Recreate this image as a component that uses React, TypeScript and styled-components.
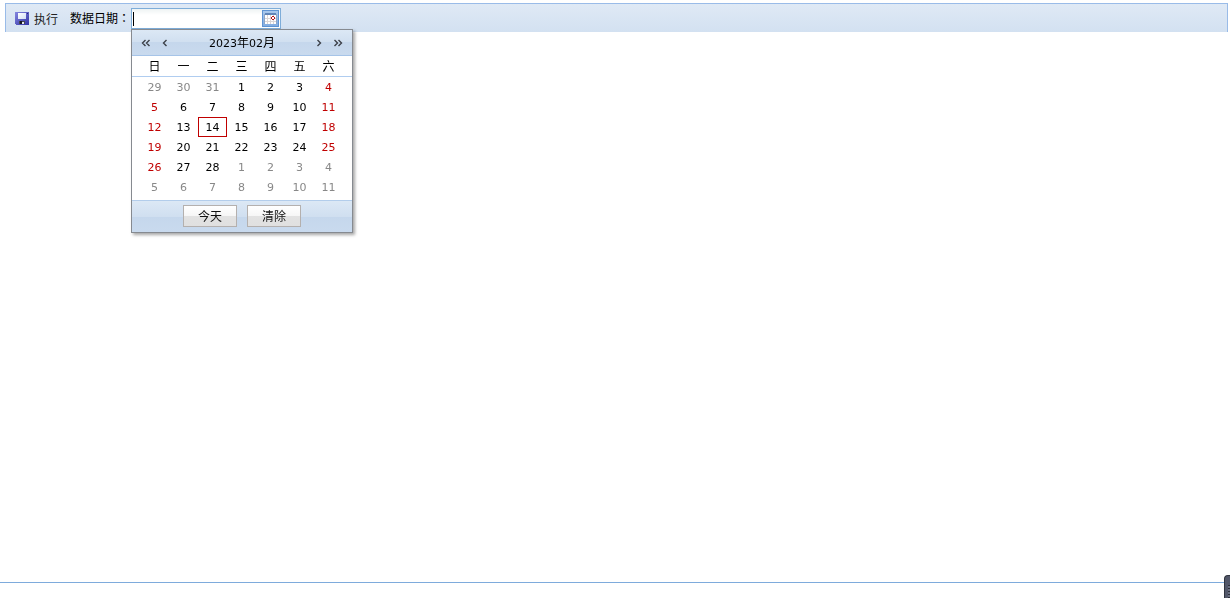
import React, { useEffect, useRef, useState } from "react";
import styled, { createGlobalStyle, css } from "styled-components";

const cjk = '"Noto Sans CJK SC", sans-serif';

const GlobalStyle = createGlobalStyle`
  *, *::before, *::after { box-sizing: border-box; }
  body {
    margin: 0;
    background: #fff;
    color: #000;
    font: 12px/16px ${cjk};
  }
`;

const Page = styled.div`
  min-height: 100vh;
  display: flex;
  flex-direction: column;
`;

const Main = styled.main`
  flex: 1;
  padding: 3px 2px 0 5px;
  border-bottom: 1px solid #7eabdc;
`;

const StatusBar = styled.footer`
  height: 15px;
`;

const Toolbar = styled.div`
  display: flex;
  align-items: flex-start;
  height: 29px;
  padding: 4px 0 0 7px;
  border: 1px solid #99bbe8;
  border-bottom: 0;
  background: linear-gradient(#dfe9f5, #d3e1f1);
`;

const ToolButton = styled.button`
  display: flex;
  align-items: center;
  gap: 4px;
  height: 22px;
  margin: 0;
  padding: 0 12px 0 1px;
  border: 0;
  background: none;
  color: #222;
  font: 12px/16px ${cjk};
`;

const FieldLabel = styled.label`
  padding-top: 2px;
  font-family: "Noto Sans CJK TC", sans-serif;
`;

const DateField = styled.div`
  position: relative;
  display: flex;
  width: 150px;
  height: 21px;
  padding: 1px;
  margin-left: 1px;
  border: 1px solid #7eadd9;
  background: linear-gradient(#eef3f3, #fff 6px);
`;

const DateInput = styled.input`
  flex: 1;
  min-width: 0;
  padding: 0 1px;
  border: 0;
  outline: 0;
  background: none;
  caret-color: transparent;
  font: 12px/16px ${cjk};
`;

const Caret = styled.span`
  position: absolute;
  top: 3px;
  left: 1px;
  width: 1px;
  height: 14px;
  background: #000;
  pointer-events: none;
`;

const Trigger = styled.button`
  display: flex;
  width: 17px;
  height: 17px;
  padding: 1px;
  border: 1px solid #5f94d3;
  background: linear-gradient(#a9c8ec, #82ade2);
`;

const Popup = styled.div`
  position: absolute;
  top: 20px;
  left: -1px;
  z-index: 1;
  width: 222px;
  border: 1px solid #868a90;
  background: #fff;
  box-shadow: 2px 2px 3px rgba(0, 0, 0, 0.35);
`;

const barFill = css`
  background: linear-gradient(#dce8f5, #d0dff0 50%, #c5d7ec 50%, #c9daee);
`;

const Header = styled.div`
  display: flex;
  align-items: center;
  height: 26px;
  padding: 0 7px;
  border-bottom: 1px solid #a6c4e8;
  ${barFill}
`;

const NavButton = styled.button<{ $wide?: boolean }>`
  display: flex;
  justify-content: center;
  width: ${(p) => (p.$wide ? 14 : 24)}px;
  padding: 0;
  border: 0;
  background: none;
`;

const Title = styled.div`
  flex: 1;
  display: flex;
  justify-content: center;
  align-items: baseline;
`;

const Digits = styled.span`
  font: 11px/16px "DejaVu Sans", sans-serif;
`;

const Days = styled.table`
  width: 100%;
  border-spacing: 0;
  margin-bottom: 3px;
  table-layout: fixed;
  text-align: center;
`;

const Gutter = styled.col<{ $width: number }>`
  width: ${(p) => p.$width}px;
`;

const WeekCell = styled.th`
  height: 21px;
  padding: 0;
  border-bottom: 1px solid #b0cdf0;
  font-weight: normal;
`;

const DayCell = styled.td<{ $tone: "plain" | "weekend" | "other"; $today?: boolean }>`
  height: 20px;
  padding: 1px 0 0;
  font: 11px/16px "DejaVu Sans", sans-serif;
  color: ${(p) => ({ plain: "#000", weekend: "#c00000", other: "#888" })[p.$tone]};
  outline: ${(p) => (p.$today ? "1px solid #c00000" : "none")};
  outline-offset: -1px;
`;

const Footer = styled.div`
  display: flex;
  justify-content: center;
  gap: 10px;
  height: 32px;
  padding-top: 4px;
  border-top: 1px solid #b3cdeb;
  ${barFill}
`;

const FooterButton = styled.button`
  width: 54px;
  height: 22px;
  padding: 0;
  border: 1px solid #b4b0ae;
  background: linear-gradient(#fff, #f6f6f6 50%, #e2e2e2 50%, #e0e0e0);
  color: #111;
  font: 12px/16px ${cjk};
`;

const Handle = styled.div`
  position: fixed;
  right: 0;
  bottom: 0;
  width: 6px;
  height: 23px;
  padding: 9px 0 0 3px;
  border: 1px solid #30343f;
  border-width: 1px 0 0 1px;
  border-radius: 4px 0 0 0;
  background: #525769;
`;

const Grip = styled.div`
  height: 13px;
  background: repeating-linear-gradient(#2d303a 0 1px, #696e80 1px 3px);
`;

const SaveIcon = () => (
  <svg width="16" height="16" viewBox="0 0 16 16" aria-hidden="true" shapeRendering="crispEdges">
    <defs>
      <linearGradient id="disk" x1="0" y1="0" x2="1" y2="1">
        <stop offset="0" stopColor="#8587e0" />
        <stop offset="1" stopColor="#3032a4" />
      </linearGradient>
      <linearGradient id="paper" x1="0" y1="0" x2="1" y2="1">
        <stop offset="0" stopColor="#fff" />
        <stop offset="1" stopColor="#cfdcf5" />
      </linearGradient>
    </defs>
    <path d="M1 1h14v13H2l-1-1z" fill="url(#disk)" />
    <path d="M4 2h8v6H4z" fill="url(#paper)" />
    <path d="M13 2h1v1h-1z" fill="#24267c" />
    <path d="M5 10h6v3H5z" fill="#44454f" />
    <path d="M6 10h2v3H6z" fill="#16171f" />
    <path d="M8 11h2v2H8z" fill="#e5e7ee" />
  </svg>
);

const CalendarIcon = () => (
  <svg width="13" height="13" viewBox="0 0 13 13" aria-hidden="true" shapeRendering="crispEdges">
    <path d="M1 1h11v11H1z" fill="#fff" />
    <path d="M1 1h11v2H1z" fill="#6186b9" />
    <path d="M0 2h1v10H0zM12 2h1v10h-1z" fill="#8fa6c7" />
    <path d="M1 6h11v1H1zM1 9h11v1H1zM3 3h1v9H3zM6 3h1v9H6zM9 3h1v9H9z" fill="#dcd6d6" />
    <path d="M8 4h2v1H8zM8 7h2v1H8zM7 5h1v2H7zM10 5h1v2h-1z" fill="#b3131a" />
    <path d="M8 5h2v2H8z" fill="#fff" />
  </svg>
);

const Chevrons = ({ double, right }: { double?: boolean; right?: boolean }) => (
  <svg width="10" height="8" viewBox="0 0 10 8" aria-hidden="true" fill="none" stroke="#3c4048" strokeWidth="1.4">
    {right ? (
      double ? <path d="M1.5 1l3 3-3 3M5.5 1l3 3-3 3" /> : <path d="M3.5 1l3 3-3 3" />
    ) : double ? (
      <path d="M4.5 1l-3 3 3 3M8.5 1l-3 3 3 3" />
    ) : (
      <path d="M6.5 1l-3 3 3 3" />
    )}
  </svg>
);

const weekdays = ["日", "一", "二", "三", "四", "五", "六"];
const weeks = [
  [29, 30, 31, 1, 2, 3, 4],
  [5, 6, 7, 8, 9, 10, 11],
  [12, 13, 14, 15, 16, 17, 18],
  [19, 20, 21, 22, 23, 24, 25],
  [26, 27, 28, 1, 2, 3, 4],
  [5, 6, 7, 8, 9, 10, 11],
];

const toneOf = (week: number, column: number, day: number) => {
  if ((week === 0 && day > 7) || (week > 3 && day < 15)) return "other";
  return column === 0 || column === 6 ? "weekend" : "plain";
};

const Calendar = ({ onPick }: { onPick: (value: string) => void }) => (
  <Popup>
    <Header>
      <NavButton $wide aria-label="上一年"><Chevrons double /></NavButton>
      <NavButton aria-label="上一月"><Chevrons /></NavButton>
      <Title>
        <Digits>2023</Digits>年<Digits>02</Digits>月
      </Title>
      <NavButton aria-label="下一月"><Chevrons right /></NavButton>
      <NavButton $wide aria-label="下一年"><Chevrons double right /></NavButton>
    </Header>
    <Days>
      <colgroup>
        <Gutter $width={8} />
        {weekdays.map((d) => <Gutter key={d} $width={29} />)}
        <Gutter $width={9} />
      </colgroup>
      <thead>
        <tr>
          <WeekCell as="td" />
          {weekdays.map((d) => <WeekCell key={d} scope="col">{d}</WeekCell>)}
          <WeekCell as="td" />
        </tr>
      </thead>
      <tbody>
        {weeks.map((week, w) => (
          <tr key={w}>
            <td />
            {week.map((day, c) => (
              <DayCell key={c} $tone={toneOf(w, c, day)} $today={w === 2 && day === 14}>{day}</DayCell>
            ))}
            <td />
          </tr>
        ))}
      </tbody>
    </Days>
    <Footer>
      <FooterButton onClick={() => onPick("2023-02-14")}>今天</FooterButton>
      <FooterButton onClick={() => onPick("")}>清除</FooterButton>
    </Footer>
  </Popup>
);

export default function App() {
  const [value, setValue] = useState("");
  const [open, setOpen] = useState(true);
  const input = useRef<HTMLInputElement>(null);

  useEffect(() => input.current?.focus(), []);

  return (
    <Page>
      <GlobalStyle />
      <Main>
        <Toolbar>
          <ToolButton><SaveIcon />执行</ToolButton>
          <FieldLabel htmlFor="data-date">数据日期：</FieldLabel>
          <DateField>
            <DateInput id="data-date" ref={input} value={value} onChange={(e) => setValue(e.target.value)} />
            {value === "" && <Caret />}
            <Trigger aria-label="选择日期" onClick={() => setOpen(!open)}><CalendarIcon /></Trigger>
            {open && <Calendar onPick={setValue} />}
          </DateField>
        </Toolbar>
      </Main>
      <StatusBar />
      <Handle><Grip /></Handle>
    </Page>
  );
}
